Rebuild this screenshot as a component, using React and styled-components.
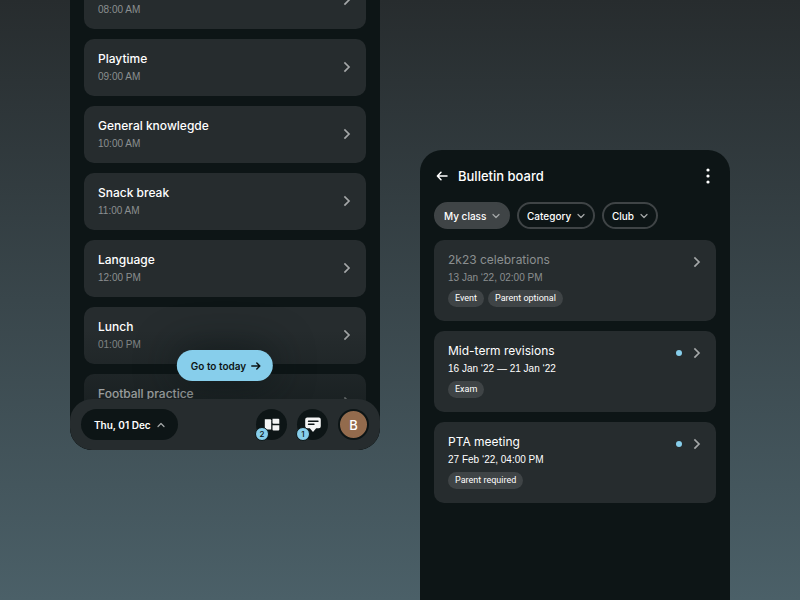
import React from 'react';
import styled, { createGlobalStyle } from 'styled-components';

const COLORS = {
  SCREEN: '#0d1516',
  CARD: '#262c2e',
  CHIP: '#3f4446',
  TEXT: '#ffffff',
  TEXT_MUTED: '#8b8f90',
  ACCENT: '#87ceeb',
  AVATAR: '#936b4d'
};

const lessons = [
  { id: 1, title: '', time: '08:00 AM' },
  { id: 2, title: 'Playtime', time: '09:00 AM' },
  { id: 3, title: 'General knowlegde', time: '10:00 AM' },
  { id: 4, title: 'Snack break', time: '11:00 AM' },
  { id: 5, title: 'Language', time: '12:00 PM' },
  { id: 6, title: 'Lunch', time: '01:00 PM' },
  { id: 7, title: 'Football practice', time: '' }
];

const filters = [
  { id: 'class', label: 'My class', active: true },
  { id: 'category', label: 'Category', active: false },
  { id: 'club', label: 'Club', active: false }
];

const bulletins = [
  {
    id: 1,
    title: '2k23 celebrations',
    date: '13 Jan ‘22, 02:00 PM',
    tags: ['Event', 'Parent optional'],
    unread: false
  },
  {
    id: 2,
    title: 'Mid-term revisions',
    date: '16 Jan ‘22 — 21 Jan ‘22',
    tags: ['Exam'],
    unread: true
  },
  {
    id: 3,
    title: 'PTA meeting',
    date: '27 Feb ‘22, 04:00 PM',
    tags: ['Parent required'],
    unread: true
  }
];

const ChevronRight = () => (
  <svg width="10" height="12" viewBox="0 0 10 12" fill="none" aria-hidden="true">
    <path d="M3 2l4 4-4 4" stroke="#a5a8a9" strokeWidth="1.7" strokeLinecap="square" strokeLinejoin="miter" />
  </svg>
);

const ChevronSmall = ({ up }) => (
  <svg width="8" height="6" viewBox="0 0 8 6" fill="none" aria-hidden="true">
    <path
      d={up ? 'M1 4.5l3-3 3 3' : 'M1 1.5l3 3 3-3'}
      stroke="#a5a8a9"
      strokeWidth="1.2"
      strokeLinecap="round"
      strokeLinejoin="round"
    />
  </svg>
);

const Arrow = ({ left }) => (
  <svg width="12" height="12" viewBox="0 0 12 12" fill="none" aria-hidden="true">
    <path
      d={left ? 'M11 6H1.8M5 2.2L1.4 6 5 9.8' : 'M2 6h8M7 3l3 3-3 3'}
      stroke="currentColor"
      strokeWidth="1.5"
      strokeLinecap="round"
      strokeLinejoin="round"
    />
  </svg>
);

const BoardIcon = () => (
  <svg width="18" height="16" viewBox="0 0 18 16" fill="#f4f5f5" aria-hidden="true">
    <path d="M1.8 2.2h5.4a1 1 0 0 1 1 1v9.300h-4.800a1.600 1.600 0 0 1-1.600-1.600z" />
    <path d="M9.500 1.800h5.800a1 1 0 0 1 1 1V6.800H10.500a1 1 0 0 1-1-1z" />
    <path d="M9.500 8.200h6.800v4.200a1 1 0 0 1-1 1h-4.800a1 1 0 0 1-1-1z" />
  </svg>
);

const ChatIcon = () => (
  <svg width="18" height="16" viewBox="0 0 18 16" aria-hidden="true">
    <path
      d="M3.200 0.500h11.600a2 2 0 0 1 2 2v6.800a2 2 0 0 1-2 2h-2.600L9 15l-3.200-3.700H3.200a2 2 0 0 1-2-2V2.500a2 2 0 0 1 2-2z"
      fill="#f4f5f5"
    />
    <path d="M4.500 4.200h9.500M4.500 7.200h5.500" stroke="#0d1516" strokeWidth="1.400" strokeLinecap="round" />
  </svg>
);

const DotsIcon = () => (
  <svg width="4" height="16" viewBox="0 0 4 16" fill="#ffffff" aria-hidden="true">
    <circle cx="2" cy="2" r="1.600" />
    <circle cx="2" cy="8" r="1.600" />
    <circle cx="2" cy="14" r="1.600" />
  </svg>
);

const App = () => (
  <>
    <GlobalStyle />
    <Page>
      <ScheduleScreen>
        <LessonList>
          {lessons.map((lesson) => (
            <li key={lesson.id}>
              <Card href="#lesson">
                <CardBody>
                  <CardTitle $strong>{lesson.title}</CardTitle>
                  <CardMeta $muted>{lesson.time}</CardMeta>
                </CardBody>
                <CardStatus>
                  <ChevronRight />
                </CardStatus>
              </Card>
            </li>
          ))}
        </LessonList>
        <ScreenFade />
        <TodayButton type="button">
          Go to today
          <Arrow />
        </TodayButton>
        <BottomBar>
          <DateButton type="button">
            Thu, 01 Dec
            <ChevronSmall up />
          </DateButton>
          <BarActions>
            <RoundButton type="button" aria-label="Boards">
              <BoardIcon />
              <Badge>2</Badge>
            </RoundButton>
            <RoundButton type="button" aria-label="Messages">
              <ChatIcon />
              <Badge>1</Badge>
            </RoundButton>
            <AvatarButton type="button">B</AvatarButton>
          </BarActions>
        </BottomBar>
      </ScheduleScreen>

      <BulletinScreen>
        <Header>
          <IconButton type="button" aria-label="Back">
            <Arrow left />
          </IconButton>
          <Heading>Bulletin board</Heading>
          <IconButton type="button" aria-label="More">
            <DotsIcon />
          </IconButton>
        </Header>
        <Filters>
          {filters.map((filter) => (
            <FilterChip key={filter.id} $active={filter.active}>
              <FilterSelect aria-label={filter.label}>
                <option>{filter.label}</option>
              </FilterSelect>
              <ChevronSmall />
            </FilterChip>
          ))}
        </Filters>
        <BulletinList>
          {bulletins.map((item) => (
            <li key={item.id}>
              <Card href="#bulletin" $tall>
                <CardBody>
                  <CardTitle $muted={!item.unread}>{item.title}</CardTitle>
                  <CardMeta $muted={!item.unread}>{item.date}</CardMeta>
                  <Tags>
                    {item.tags.map((tag) => (
                      <Tag key={tag}>{tag}</Tag>
                    ))}
                  </Tags>
                </CardBody>
                <CardStatus $tall>
                  {item.unread && <UnreadDot />}
                  <ChevronRight />
                </CardStatus>
              </Card>
            </li>
          ))}
        </BulletinList>
      </BulletinScreen>
    </Page>
  </>
);

// Styled Components
const GlobalStyle = createGlobalStyle`
  * {
    box-sizing: border-box;
  }

  body {
    margin: 0;
    font-family: Inter, 'Liberation Sans', sans-serif;
    color: ${COLORS.TEXT};
  }

  button, select {
    font: inherit;
    color: inherit;
    border: 0;
    padding: 0;
    background: none;
    cursor: pointer;
  }

  ul {
    list-style: none;
    margin: 0;
    padding: 0;
  }
`;

const Page = styled.main`
  display: grid;
  grid-template-columns: 1fr 1fr;
  gap: 40px;
  height: 100vh;
  padding: 0 70px;
  background: linear-gradient(#272c2e, #4b6068);
`;

const ScheduleScreen = styled.section`
  position: relative;
  display: flex;
  flex-direction: column;
  justify-content: flex-end;
  height: 75vh;
  padding: 0 14px 19px;
  overflow: hidden;
  border-radius: 0 0 22px 22px;
  background: ${COLORS.SCREEN};
`;

const BulletinScreen = styled.section`
  margin-top: 25vh;
  padding: 14px 14px 0;
  overflow: hidden;
  border-radius: 22px 22px 0 0;
  background: ${COLORS.SCREEN};
`;

const LessonList = styled.ul`
  display: flex;
  flex-direction: column;
  gap: 10px;
`;

const BulletinList = styled(LessonList)`
  margin-top: 11px;
`;

const Card = styled.a`
  display: flex;
  align-items: flex-start;
  justify-content: space-between;
  padding: ${(props) => (props.$tall ? '12px 14px 14px' : '12px 14px 11px')};
  border-radius: 10px;
  background: ${COLORS.CARD};
  color: inherit;
  text-decoration: none;
`;

const CardBody = styled.div`
  display: flex;
  flex-direction: column;
  gap: 2px;
`;

const CardTitle = styled.h2`
  min-height: 16px;
  margin: 0;
  font-size: 12px;
  line-height: 16px;
  font-weight: ${(props) => (props.$strong ? 500 : 400)};
  color: ${(props) => (props.$muted ? COLORS.TEXT_MUTED : COLORS.TEXT)};
`;

const CardMeta = styled.span`
  min-height: 16px;
  font-family: 'Liberation Sans', sans-serif;
  font-size: 10px;
  line-height: 16px;
  color: ${(props) => (props.$muted ? COLORS.TEXT_MUTED : COLORS.TEXT)};
`;

const CardStatus = styled.div`
  display: flex;
  align-items: center;
  gap: 10px;
  height: ${(props) => (props.$tall ? 20 : 32)}px;
`;

const UnreadDot = styled.span`
  width: 6px;
  height: 6px;
  border-radius: 50%;
  background: ${COLORS.ACCENT};
`;

const Tags = styled.div`
  display: flex;
  gap: 4px;
  margin-top: 2px;
`;

const Tag = styled.span`
  padding: 0 7px;
  border-radius: 9px;
  font-family: Roboto, sans-serif;
  font-size: 9px;
  line-height: 17px;
  font-weight: 400;
  background: ${COLORS.CHIP};
`;

const ScreenFade = styled.div`
  position: absolute;
  right: 0;
  bottom: 0;
  left: 0;
  height: 120px;
  background: linear-gradient(rgba(13, 21, 22, 0), rgba(13, 21, 22, 0.8));
  pointer-events: none;
`;

const TodayButton = styled.button`
  position: absolute;
  bottom: 69px;
  left: 50%;
  display: flex;
  align-items: center;
  gap: 4px;
  height: 31px;
  padding: 0 11px 0 14px;
  border-radius: 16px;
  font-size: 10px;
  font-weight: 600;
  white-space: nowrap;
  color: ${COLORS.SCREEN};
  background: ${COLORS.ACCENT};
  box-shadow: 0 0 40px rgba(13, 21, 22, 0.8);
  transform: translateX(-50%);
`;

const BottomBar = styled.nav`
  position: absolute;
  right: 0;
  bottom: 0;
  left: 0;
  display: flex;
  align-items: center;
  justify-content: space-between;
  padding: 10px 11px;
  border-radius: 22px;
  background: ${COLORS.CARD};
`;

const DateButton = styled.button`
  display: flex;
  align-items: center;
  gap: 6px;
  height: 31px;
  padding: 0 13px;
  border-radius: 16px;
  font-size: 10px;
  font-weight: 600;
  background: ${COLORS.SCREEN};
`;

const BarActions = styled.div`
  display: flex;
  gap: 10px;
`;

const RoundButton = styled.button`
  position: relative;
  display: flex;
  align-items: center;
  justify-content: center;
  width: 31px;
  height: 31px;
  border-radius: 50%;
  background: ${COLORS.SCREEN};
`;

const AvatarButton = styled(RoundButton)`
  border: 2px solid ${COLORS.SCREEN};
  font-size: 13px;
  font-weight: 500;
  background: ${COLORS.AVATAR};
`;

const Badge = styled.span`
  position: absolute;
  bottom: -1px;
  left: -1px;
  width: 14px;
  height: 14px;
  border: 1px solid ${COLORS.SCREEN};
  border-radius: 50%;
  font-size: 8px;
  line-height: 12px;
  font-weight: 500;
  text-align: center;
  color: ${COLORS.SCREEN};
  background: ${COLORS.ACCENT};
`;

const Header = styled.header`
  display: flex;
  align-items: center;
  gap: 8px;
  height: 24px;
`;

const IconButton = styled.button`
  display: flex;
  align-items: center;
  justify-content: center;
  width: 16px;
  height: 24px;
`;

const Heading = styled.h1`
  flex: 1;
  margin: 0;
  font-size: 13px;
  line-height: 24px;
  font-weight: 500;
`;

const Filters = styled.div`
  display: flex;
  gap: 7px;
  margin-top: 14px;
`;

const FilterChip = styled.label`
  display: flex;
  align-items: center;
  gap: 5px;
  height: 27px;
  padding: 0 8px;
  border: 2px solid ${COLORS.CHIP};
  border-radius: 14px;
  background: ${(props) => (props.$active ? COLORS.CHIP : 'transparent')};
`;

const FilterSelect = styled.select`
  appearance: none;
  font-size: 10px;
  font-weight: 500;
`;

export default App;
